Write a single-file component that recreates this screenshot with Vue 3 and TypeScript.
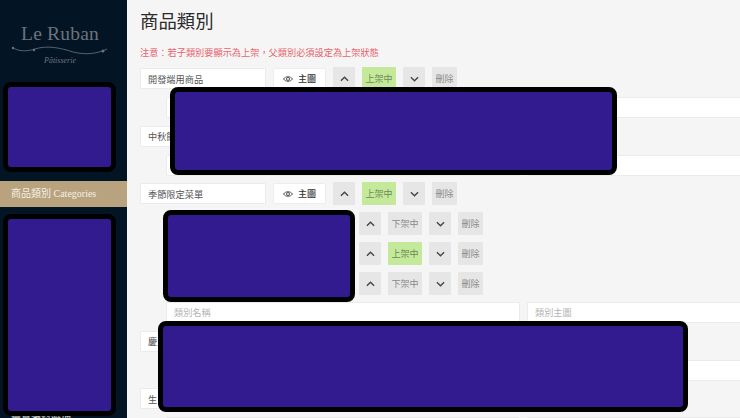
<script setup lang="ts">
interface SubCategory {
  id: number
  active: boolean
}

interface Category {
  name: string
  active: boolean
  children: SubCategory[]
}

const categories: Category[] = [
  { name: '開發端用商品', active: true, children: [] },
  { name: '中秋節禮盒', active: true, children: [] },
  {
    name: '季節限定菜單',
    active: true,
    children: [
      { id: 1, active: false },
      { id: 2, active: true },
      { id: 3, active: false },
    ],
  },
  { name: '慶生蛋糕', active: true, children: [] },
  { name: '生日蛋糕', active: true, children: [] },
]

// redacted regions from the reference, they sit over the page
const masks = [
  { left: 3, top: 82, width: 113, height: 90 },
  { left: 3, top: 214, width: 113, height: 202 },
  { left: 170, top: 87, width: 447, height: 88 },
  { left: 163, top: 210, width: 192, height: 92 },
  { left: 158, top: 321, width: 530, height: 91 },
]

function maskStyle(m: { left: number; top: number; width: number; height: number }) {
  return {
    left: `${m.left}px`,
    top: `${m.top}px`,
    width: `${m.width}px`,
    height: `${m.height}px`,
  }
}
</script>

<template>
  <div class="page">
    <aside class="sidebar">
      <div class="logo">
        <div class="logo-name">Le Ruban</div>
        <svg class="logo-curl" width="98" height="12" viewBox="0 0 98 12" fill="none">
          <path
            d="M2 3 C8 6 14 7 24 4 C36 0 50 3 62 7 C74 10 86 9 96 4"
            stroke="#6d7379"
            stroke-width="0.8"
          />
          <circle cx="2" cy="3" r="1.2" fill="#6d7379" />
          <circle cx="23" cy="5" r="1.2" fill="#6d7379" />
          <circle cx="92" cy="6" r="1.5" fill="#6d7379" />
        </svg>
        <div class="logo-sub">Pâtisserie</div>
      </div>
      <div class="nav-item active">商品類別 Categories</div>
      <div class="nav-spacer" />
      <div class="nav-item">會員資料管理</div>
    </aside>

    <main class="content">
      <h1 class="title">商品類別</h1>
      <p class="notice">注意：若子類別要顯示為上架，父類別必須設定為上架狀態</p>

      <section v-for="cat in categories" :key="cat.name" class="group">
        <div class="row">
          <input class="field name" :value="cat.name" readonly />
          <button class="image-btn" type="button">
            <svg width="10" height="8" viewBox="0 0 20 14" fill="none" stroke="#444" stroke-width="1.8">
              <path d="M1 7 C5 1 15 1 19 7 C15 13 5 13 1 7 Z" />
              <circle cx="10" cy="7" r="3" />
            </svg>
            主圖
          </button>
          <button class="act move" type="button">
            <svg width="9" height="6" viewBox="0 0 10 6" fill="none" stroke="#444" stroke-width="1.5"><path d="M1 5 L5 1 L9 5" /></svg>
          </button>
          <button class="act status" :class="{ on: cat.active }" type="button">{{ cat.active ? '上架中' : '下架中' }}</button>
          <button class="act move" type="button">
            <svg width="9" height="6" viewBox="0 0 10 6" fill="none" stroke="#444" stroke-width="1.5"><path d="M1 1 L5 5 L9 1" /></svg>
          </button>
          <button class="act remove" type="button">刪除</button>
        </div>

        <div v-for="sub in cat.children" :key="sub.id" class="row sub">
          <div class="sub-name" />
          <button class="act move" type="button">
            <svg width="9" height="6" viewBox="0 0 10 6" fill="none" stroke="#444" stroke-width="1.5"><path d="M1 5 L5 1 L9 5" /></svg>
          </button>
          <button class="act status" :class="{ on: sub.active }" type="button">{{ sub.active ? '上架中' : '下架中' }}</button>
          <button class="act move" type="button">
            <svg width="9" height="6" viewBox="0 0 10 6" fill="none" stroke="#444" stroke-width="1.5"><path d="M1 1 L5 5 L9 1" /></svg>
          </button>
          <button class="act remove" type="button">刪除</button>
        </div>

        <div class="new-row">
          <input class="field new-name" placeholder="類別名稱" />
          <input class="field new-image" placeholder="類別主圖" />
        </div>
      </section>
    </main>

    <div v-for="(m, i) in masks" :key="i" class="mask" :style="maskStyle(m)" />
  </div>
</template>

<style>
html,
body {
  margin: 0;
  overflow: hidden;
}
</style>

<style scoped>
.page {
  position: relative;
  display: flex;
  width: 740px;
  height: 418px;
  overflow: hidden;
  background: #f5f5f5;
  font-family: "Liberation Serif", "Noto Sans CJK TC", serif;
}

.sidebar {
  display: flex;
  flex-direction: column;
  flex: 0 0 127px;
  box-sizing: border-box;
  overflow: hidden;
  background: #031525;
}

.logo {
  display: flex;
  flex-direction: column;
  align-items: center;
  flex-shrink: 0;
  height: 181px;
  padding: 23px 7px 0 0;
  box-sizing: border-box;
  color: #6d7379;
}

.logo-name {
  font-size: 19.5px;
  line-height: 22px;
  letter-spacing: 0.2px;
}

.logo-sub {
  margin-top: -1px;
  font-size: 8px;
  line-height: 10px;
  font-style: italic;
}

.nav-item {
  height: 26px;
  padding-left: 11px;
  line-height: 26px;
  font-size: 10px;
  color: #e8e4dc;
  flex-shrink: 0;
}

.nav-item.active {
  background: #b9a37f;
  color: #f4efe6;
}

.nav-spacer {
  height: 200px;
  flex-shrink: 0;
}

.content {
  flex: 1;
  min-width: 0;
  padding: 12px 0 0 13px;
}

.title {
  margin: 0;
  font-size: 18.4px;
  line-height: 21px;
  font-weight: 400;
  color: #2b2b2b;
}

.notice {
  margin: 14px 0 8px;
  font-size: 9.2px;
  line-height: 12px;
  color: #e8626c;
}

.group {
  display: flex;
  flex-direction: column;
  gap: 7px;
  margin-bottom: 6.5px;
}

.row {
  display: flex;
  align-items: center;
  gap: 7px;
  height: 23px;
}

.field {
  box-sizing: border-box;
  height: 21px;
  padding: 0 7px;
  border: 1px solid #ebebeb;
  border-radius: 1px;
  background: #fff;
  outline: none;
  font-family: inherit;
  font-size: 9.2px;
  color: #555;
}

.field::placeholder {
  color: #b4b4b4;
}

.name {
  width: 126px;
}

.image-btn {
  display: flex;
  align-items: center;
  justify-content: center;
  gap: 5px;
  box-sizing: border-box;
  width: 53px;
  height: 21px;
  padding: 0;
  border: 1px solid #ededed;
  border-radius: 1px;
  background: #fff;
  font-family: "Noto Sans CJK TC", sans-serif;
  font-size: 9px;
  font-weight: 500;
  color: #333;
}

.act {
  display: flex;
  align-items: center;
  justify-content: center;
  height: 23px;
  padding: 0;
  border: none;
  border-radius: 1px;
  background: #e6e6e6;
  font-family: inherit;
  font-size: 9px;
  color: #8a8a8a;
}

.move {
  width: 22px;
}

.status {
  width: 34px;
}

.status.on {
  background: #c4e99a;
  color: #6c8a56;
}

.remove {
  width: 25px;
}

.sub {
  margin-left: 26px;
}

.sub-name {
  width: 186px;
  flex-shrink: 0;
}

.new-row {
  display: flex;
  gap: 7px;
  margin-left: 26px;
}

.new-name {
  flex: 0 0 354px;
}

.new-image {
  flex: 0 0 240px;
}

.mask {
  position: absolute;
  box-sizing: border-box;
  border: 5px solid #000;
  border-radius: 8px;
  background: #311b8f;
}
</style>
